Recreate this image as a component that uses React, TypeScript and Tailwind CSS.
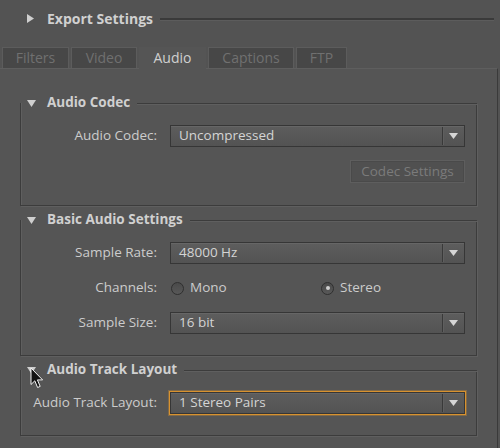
import React from "react";

const TriRight = () => (
  <svg width="7" height="9" viewBox="0 0 7 9" className="shrink-0">
    <path d="M0 0 L7 4.5 L0 9 Z" fill="#cfcfcf" />
  </svg>
);

const TriDown = () => (
  <svg width="9" height="7" viewBox="0 0 9 7" className="shrink-0">
    <path d="M0 0 L9 0 L4.5 7 Z" fill="#cfcfcf" />
  </svg>
);

function Group({ title, children, pb = "pb-[21px]" }: { title: string; children: React.ReactNode; pb?: string }) {
  return (
    <div>
      <div className="relative z-10 flex h-[20px] items-center">
        <span className="ml-[7px]"><TriDown /></span>
        <span className="ml-[11px] font-bold text-[#d0d0d0]">{title}</span>
        <div className="ml-[7px] h-px flex-1 bg-[#3c3c3c] shadow-[0_1px_0_#5f5f5f]" />
      </div>
      <div className={`-mt-[10px] border-x border-b border-[#3c3c3c] pt-[22px] shadow-[1px_1px_0_#5f5f5f,inset_1px_0_0_#5f5f5f] ${pb}`}>
        <div className="flex flex-col gap-[13px]">{children}</div>
      </div>
    </div>
  );
}

function Row({ label, children }: { label: string; children: React.ReactNode }) {
  return (
    <div className="flex h-[22px] items-center">
      <span className="w-[136px] shrink-0 whitespace-nowrap text-right text-[#cccccc]">{label}</span>
      <div className="ml-[13px] mr-[11px] flex flex-1 items-center">{children}</div>
    </div>
  );
}

function Select({ value }: { value: string }) {
  return (
    <div className="flex h-[22px] flex-1 items-center border border-[#363636] bg-gradient-to-b from-[#5d5d5d] to-[#535353] shadow-[inset_0_1px_0_#666]">
      <span className="flex-1 pl-[8px] text-[#d4d4d4]">{value}</span>
      <div className="h-[18px] w-px bg-[#393939] shadow-[1px_0_0_#5f5f5f]" />
      <div className="flex w-[21px] items-center justify-center">
        <svg width="9" height="6" viewBox="0 0 9 6">
          <path d="M0 0 L9 0 L4.5 6 Z" fill="#d6d6d6" />
        </svg>
      </div>
    </div>
  );
}

function Radio({ label, checked }: { label: string; checked?: boolean }) {
  return (
    <div className="flex items-center">
      <div className="flex h-[13px] w-[13px] items-center justify-center rounded-full border border-[#2f2f2f] bg-gradient-to-b from-[#4a4a4a] to-[#585858]">
        {checked && <div className="h-[4px] w-[4px] rounded-full bg-[#cfcfcf]" />}
      </div>
      <span className="ml-[6px] text-[#cccccc]">{label}</span>
    </div>
  );
}

const tabs = [
  { name: "Filters", w: "w-[67px]" },
  { name: "Video", w: "w-[66px]" },
  { name: "Audio", w: "w-[67px]", active: true },
  { name: "Captions", w: "w-[86px]" },
  { name: "FTP", w: "w-[51px]" },
];

export default function App() {
  return (
    <div className="relative flex h-[448px] w-[500px] flex-col overflow-hidden bg-[#535353] font-['Open_Sans',sans-serif] text-[13.5px] leading-none">
      {/* Export Settings header */}
      <div className="flex h-[37px] shrink-0 items-center pl-[27px] pr-[6px]">
        <TriRight />
        <span className="ml-[13px] text-[14px] font-bold text-[#d0d0d0]">Export Settings</span>
        <div className="ml-[7px] h-[2px] flex-1 bg-[#3a3a3a] shadow-[0_1px_0_#5c5c5c]" />
      </div>

      {/* Tabs */}
      <div className="mt-[10px] flex h-[21px] shrink-0 gap-[2px] pl-[2px] text-[14px]">
        {tabs.map((t) =>
          t.active ? (
            <div key={t.name} className={`${t.w} relative z-10 -mb-px flex items-center justify-center bg-[#555] text-[#d0d0d0]`}>
              {t.name}
            </div>
          ) : (
            <div
              key={t.name}
              className={`${t.w} flex items-center justify-center border border-b-0 border-[#5c5c5c] bg-[#474747] text-[#707070]`}
            >
              {t.name}
            </div>
          )
        )}
      </div>

      {/* Panel */}
      <div className="w-[498px] flex-1 border-r border-t border-r-[#3a3a3a] border-t-[#5e5e5e] bg-[#555] pl-[20px] pr-[20px] pt-[24px]">
        <Group title="Audio Codec" pb="pb-[22px]">
          <Row label="Audio Codec:">
            <Select value="Uncompressed" />
          </Row>
          <div className="flex h-[23px] justify-end pr-[11px]">
            <div className="flex w-[115px] items-center justify-center border border-[#5e5e5e] bg-[#505050] text-[#7b7b7b] shadow-[inset_0_0_0_1px_#4a4a4a]">
              Codec Settings
            </div>
          </div>
        </Group>

        <div className="mt-[4px]">
          <Group title="Basic Audio Settings">
            <Row label="Sample Rate:">
              <Select value="48000 Hz" />
            </Row>
            <Row label="Channels:">
              <div className="w-[151px] pl-[1px]">
                <Radio label="Mono" />
              </div>
              <Radio label="Stereo" checked />
            </Row>
            <Row label="Sample Size:">
              <Select value="16 bit" />
            </Row>
          </Group>
        </div>

        <div className="mt-[4px]">
          <Group title="Audio Track Layout">
            <Row label="Audio Track Layout:">
              <div className="-m-px flex flex-1 border border-[#d8922f] shadow-[0_0_0_1px_rgba(216,146,47,0.35)]">
                <Select value="1 Stereo Pairs" />
              </div>
            </Row>
          </Group>
        </div>
      </div>

      {/* Mouse cursor */}
      <svg width="14" height="22" viewBox="0 0 14 22" className="absolute left-[30px] top-[367px] z-20">
        <path d="M1 1 L1 17.5 L4.8 13.8 L7.6 20.5 L10.2 19.4 L7.4 12.9 L12.6 12.9 Z" fill="#111" stroke="#f2f2f2" strokeWidth="1" strokeLinejoin="round" />
      </svg>
    </div>
  );
}
